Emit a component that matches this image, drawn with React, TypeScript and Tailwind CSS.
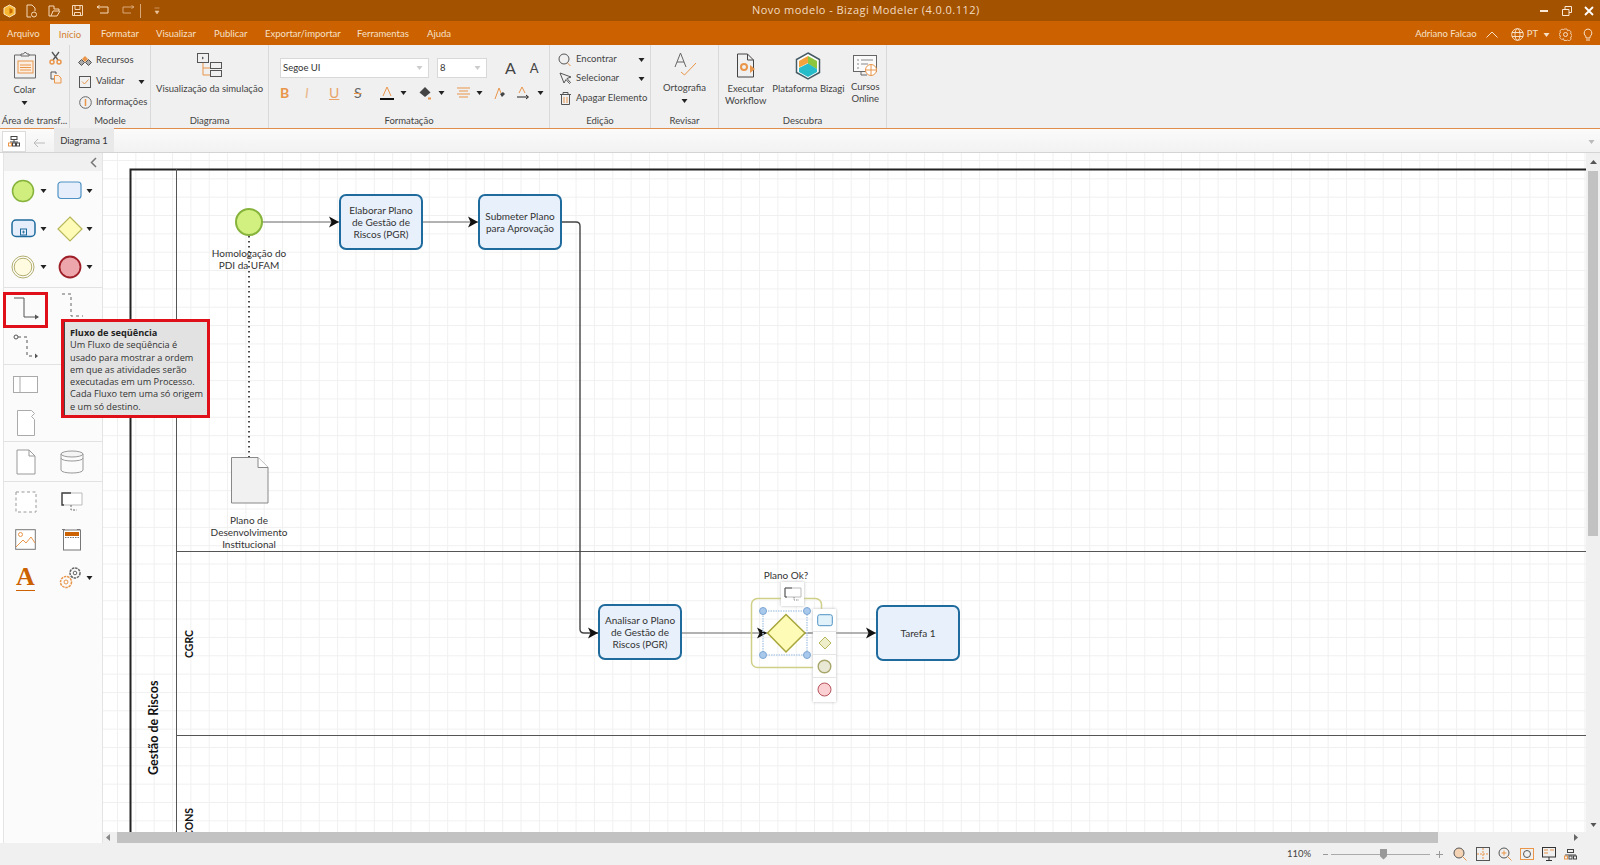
import React from "react";

const Caret = ({ c = "#222" }: { c?: string }) => (
  <svg width="7" height="4" viewBox="0 0 7 4" className="shrink-0"><path d="M0.5 0h6L3.5 4z" fill={c} /></svg>
);

const Ic = ({ w = 16, h = 16, children, vb }: { w?: number; h?: number; vb?: string; children: React.ReactNode }) => (
  <svg width={w} height={h} viewBox={vb ?? `0 0 ${w} ${h}`} fill="none" className="shrink-0">{children}</svg>
);

const Group = ({ w, label, children }: { w: string; label: string; children: React.ReactNode }) => (
  <div className={`${w} h-full flex flex-col border-r border-[#d9d9d9] shrink-0`}>
    <div className="flex-1 min-h-0 flex">{children}</div>
    <div className="h-[15px] text-center text-[9.5px] leading-[15px] text-[#444] whitespace-nowrap">{label}</div>
  </div>
);

const Row = ({ icon, text, caret, cls }: { icon: React.ReactNode; text: string; caret?: boolean; cls?: string }) => (
  <div className={`flex items-center h-[21px] ${cls ?? ""}`}>
    <span className="w-[16px] flex justify-center shrink-0">{icon}</span>
    <span className="ml-[3px] text-[9.5px] text-[#444] whitespace-nowrap flex-1">{text}</span>
    {caret && <Caret />}
  </div>
);

function TitleBar() {
  const s = "#f6d9b8";
  return (
    <div className="h-[21px] bg-[#a35200] flex items-center relative shrink-0">
      <div className="flex items-center pl-[3px]">
        <Ic w={13} h={14}><path d="M6.5 1l5.5 3v6l-5.5 3L1 10V4z" fill="#f7b733" stroke="#fde7c0" /><path d="M6.5 4l3 1.500v3l-3 1.500z" fill="#c96a00" /></Ic>
        <span className="ml-[8px]"><Ic w={14} h={14}><path d="M3 1h5l3 3v3M3 1v12h4" stroke={s} /><circle cx="10" cy="10.500" r="2.500" stroke={s} /></Ic></span>
        <span className="ml-[9px]"><Ic w={14} h={14}><path d="M2 2h5v3h5v2H6l-2 5H2zM4 12h6l3-5" stroke={s} /></Ic></span>
        <span className="ml-[10px]"><Ic w={13} h={13}><path d="M1.500 1.500h10v10h-10zM4 1.500v4h5v-4M3.500 11.500v-3h6v3" stroke={s} /></Ic></span>
        <span className="ml-[12px]"><Ic w={14} h={12}><path d="M1 2h11v6H4M3.500 0.500L1 2l2.500 1.500" stroke={s} /></Ic></span>
        <span className="ml-[11px]"><Ic w={14} h={12}><path d="M13 2H2v6h8M10.500 0.500L13 2l-2.500 1.500" stroke="#d9a878" /></Ic></span>
        <span className="ml-[5px] w-px h-[14px] bg-[#d9a878]" />
        <span className="ml-[13px]"><Ic w={6} h={8}><path d="M0.500 1h5M1 4h4l-2 3z" fill="#e9c49c" stroke="#e9c49c" strokeWidth=".6" /></Ic></span>
      </div>
      <div className="absolute left-[752px] top-0 h-[21px] leading-[20px] text-[11px] tracking-[0.45px] text-[#f3dcc2] whitespace-nowrap [font-family:'Open_Sans',sans-serif]">Novo modelo - Bizagi Modeler (4.0.0.112)</div>
      <div className="ml-auto flex items-center pr-[6px]">
        <span className="w-[8px] h-[2px] bg-[#fbe9d6]" />
        <span className="ml-[14px]"><Ic w={10} h={10}><path d="M0.500 3.500h6.500v6H0.500zM3 3.500V0.500h6.500v6H7" stroke="#fbe9d6" /></Ic></span>
        <span className="ml-[12px]"><Ic w={10} h={10}><path d="M1 1l8 8M9 1l-8 8" stroke="#fff" strokeWidth="1.800" /></Ic></span>
      </div>
    </div>
  );
}

function MenuBar() {
  const t = "text-[9.5px] text-[#f6e0c8] whitespace-nowrap";
  return (
    <div className="h-[24px] bg-[#cc6100] flex items-end shrink-0">
      <span className={`${t} ml-[7px] w-[43px] h-[24px] leading-[26px]`}>Arquivo</span>
      <span className="w-[40px] h-[21px] bg-[#f0f0f0] text-[9.5px] leading-[21px] text-center text-[#d4802f]">Início</span>
      <span className={`${t} ml-[11px] w-[55px] h-[24px] leading-[26px]`}>Formatar</span>
      <span className={`${t} w-[58px] h-[24px] leading-[26px]`}>Visualizar</span>
      <span className={`${t} w-[51px] h-[24px] leading-[26px]`}>Publicar</span>
      <span className={`${t} w-[92px] h-[24px] leading-[26px]`}>Exportar/importar</span>
      <span className={`${t} w-[70px] h-[24px] leading-[26px]`}>Ferramentas</span>
      <span className={`${t} h-[24px] leading-[26px]`}>Ajuda</span>
      <div className="ml-auto h-[24px] flex items-center pr-[7px] pt-[3px]">
        <span className={t}>Adriano Falcao</span>
        <span className="ml-[9px]"><Ic w={12} h={7}><path d="M0.500 6.500L6 1l5.500 5.500" stroke="#f6e0c8" /></Ic></span>
        <span className="ml-[13px]"><Ic w={13} h={13}><circle cx="6.500" cy="6.500" r="5.800" stroke="#f6e0c8" /><ellipse cx="6.500" cy="6.500" rx="2.500" ry="5.800" stroke="#f6e0c8" /><path d="M1 4.500h11M1 8.500h11" stroke="#f6e0c8" /></Ic></span>
        <span className={`${t} ml-[3px]`}>PT</span>
        <span className="ml-[5px]"><Caret c="#f6e0c8" /></span>
        <span className="ml-[9px]"><Ic w={13} h={13}><circle cx="6.500" cy="6.500" r="2" stroke="#f6e0c8" /><path d="M5 1h3l.5 1.800 1.700-.8 2 2-.9 1.600 1.700.9v2l-1.700.8.900 1.700-2 2-1.700-.9L8 12.500H5l-.5-1.800-1.700.9-2-2 .9-1.700L0 7.100v-1.500l1.700-.9-.9-1.700 2-2 1.700.8z" stroke="#f6e0c8" strokeWidth=".8" /></Ic></span>
        <span className="ml-[11px]"><Ic w={10} h={14}><path d="M5 1a4 4 0 0 1 2.500 7c-.5.500-.5 1-.5 2H3c0-1 0-1.500-.5-2A4 4 0 0 1 5 1zM3 12h4" stroke="#f6e0c8" /></Ic></span>
      </div>
    </div>
  );
}

const O = "#e9954a";
const G = "#666";

function Ribbon() {
  return (
    <div className="h-[84px] bg-[#f0f0f0] border-b border-[#e08c4a] flex shrink-0">
      <Group w="w-[70px]" label="Área de transf...">
        <div className="w-[49px] flex flex-col items-center pt-[7px]">
          <Ic w={24} h={27}><path d="M8 3H1.500v23h21V3H16" stroke={G} /><path d="M8 4V2h2.500l1-1.500 1.500 0 1 1.500H16v2z" stroke={G} /><rect x="5" y="9" width="15" height="12" fill="#fbeee0" stroke={O} /><path d="M7 13h11M7 15.500h11M7 18h11" stroke={O} /></Ic>
          <span className="text-[9.5px] text-[#444] leading-[12px] mt-[5px]">Colar</span>
          <span className="mt-[5px]"><Caret /></span>
        </div>
        <div className="flex flex-col items-center pt-[6px] gap-[6px]">
          <Ic w={13} h={14}><path d="M3 1l6 8M10 1L4 9" stroke="#555" strokeWidth="1.300" /><circle cx="3" cy="11" r="2" stroke={O} strokeWidth="1.500" /><circle cx="10" cy="11" r="2" stroke={O} strokeWidth="1.500" /></Ic>
          <Ic w={12} h={13}><path d="M1 1h5v2M1 1v7h3" stroke="#555" /><path d="M4.500 4.500h4l2.500 2.500v5H4.500z" fill="#fbeee0" stroke={O} /></Ic>
        </div>
      </Group>
      <Group w="w-[81px]" label="Modele">
        <div className="flex flex-col pl-[7px] pr-[5px] pt-[5px] w-full">
          <Row text="Recursos" icon={<Ic w={14} h={12}><path d="M7 1l3 3-3 3-3-3z" fill="#e9954a" /><path d="M3.500 4.500l3 3-3 3-3-3zM10.500 4.500l3 3-3 3-3-3z" stroke="#555" fill="#aaa" /></Ic>} />
          <Row text="Validar" caret icon={<Ic w={12} h={12}><rect x=".5" y=".5" width="11" height="11" stroke="#555" /><path d="M3 5.500l2.500 2.500L9.500 3.500" stroke={O} /></Ic>} />
          <Row text="Informações" icon={<Ic w={13} h={13}><circle cx="6.500" cy="6.500" r="5.800" stroke="#666" /><path d="M6.500 3v7" stroke={O} strokeWidth="1.500" /></Ic>} />
        </div>
      </Group>
      <Group w="w-[118px]" label="Diagrama">
        <div className="w-full flex flex-col items-center pt-[8px]">
          <Ic w={25} h={26}><rect x=".5" y=".5" width="11" height="9" stroke="#555" /><path d="M5 3.500l2 1.500-2 1.500z" fill="#555" /><path d="M6 10v12h7M6 15h7" stroke={O} /><rect x="13.500" y="9.500" width="11" height="6" stroke="#555" /><rect x="13.500" y="17.500" width="11" height="6" stroke="#555" /></Ic>
          <span className="text-[9.5px] text-[#444] leading-[12px] mt-[4px] whitespace-nowrap">Visualização da simulação</span>
        </div>
      </Group>
      <Group w="w-[281px]" label="Formatação">
        <div className="w-full pl-[11px] pt-[13px]">
          <div className="flex items-center h-[20px]">
            <div className="w-[149px] h-[20px] bg-white border border-[#d8d8d8] flex items-center pl-[2px] pr-[5px] text-[9.5px] text-[#333]"><span className="flex-1">Segoe UI</span><Caret c="#ccc" /></div>
            <div className="ml-[8px] w-[50px] h-[20px] bg-white border border-[#d8d8d8] flex items-center pl-[2px] pr-[5px] text-[9.5px] text-[#333]"><span className="flex-1">8</span><Caret c="#ccc" /></div>
            <span className="ml-[18px] text-[16px] leading-none text-[#444]">A</span>
            <span className="ml-[14px] text-[13px] leading-none text-[#444]">A</span>
          </div>
          <div className="flex items-center h-[20px] mt-[5px] text-[14px] leading-none">
            <span className="w-[10px] font-bold text-[#e9954a]">B</span>
            <span className="ml-[15px] w-[8px] italic text-[#e9b78a]">I</span>
            <span className="ml-[16px] w-[10px] underline text-[#e9a368]">U</span>
            <span className="ml-[15px] w-[10px] line-through decoration-[#e9954a] text-[#666]">S</span>
            <span className="ml-[16px]"><Ic w={14} h={15}><path d="M3 10L7 1l4 9" stroke={O} /><path d="M0 13h14" stroke="#111" strokeWidth="2" /></Ic></span>
            <span className="ml-[6px]"><Caret /></span>
            <span className="ml-[11px]"><Ic w={14} h={14}><path d="M7 1l5.500 5.500L7 11 1.500 6.500z" fill="#444" /><path d="M10 12.500h3" stroke={O} strokeWidth="2" /></Ic></span>
            <span className="ml-[6px]"><Caret /></span>
            <span className="ml-[12px]"><Ic w={13} h={12}><path d="M0 1h13M2 4h9M0 7h13M2 10h9" stroke={O} /></Ic></span>
            <span className="ml-[6px]"><Caret /></span>
            <span className="ml-[10px]"><Ic w={13} h={13}><path d="M2 12L6 1l2 5" stroke={O} /><path d="M7 7l3-2 2 2-3 3z" fill="#444" /></Ic></span>
            <span className="ml-[10px]"><Ic w={14} h={14}><path d="M3 7l3-6 3 6" stroke={O} /><path d="M1 11h11M10 9l2.500 2L10 13" stroke="#222" /></Ic></span>
            <span className="ml-[7px]"><Caret /></span>
          </div>
        </div>
      </Group>
      <Group w="w-[101px]" label="Edição">
        <div className="w-full flex flex-col pl-[7px] pr-[5px] pt-[5px]">
          <Row text="Encontrar" caret cls="!h-[19px]" icon={<Ic w={14} h={14}><circle cx="6" cy="6" r="5" stroke="#555" /><path d="M9.500 10l3 3" stroke={O} /></Ic>} />
          <Row text="Selecionar" caret cls="!h-[19px]" icon={<Ic w={13} h={13}><path d="M1 1l11 4-4 1.500 3.500 4-1 1-3.500-4-2 3.500z" stroke="#555" /></Ic>} />
          <Row text="Apagar Elemento" cls="!h-[21px]" icon={<Ic w={11} h={13}><path d="M0 2.500h11M3 2V.5h5V2" stroke="#555" /><path d="M1.500 3v9.500h8V3" stroke="#555" /><path d="M4 5v6M7 5v6" stroke={O} /></Ic>} />
        </div>
      </Group>
      <Group w="w-[68px]" label="Revisar">
        <div className="w-full flex flex-col items-center pt-[6px]">
          <Ic w={24} h={26}><path d="M2 16L7.500 2 13 16M4 11h7" stroke="#666" /><path d="M8 21l3.500 3L23 12" stroke={O} /></Ic>
          <span className="text-[9.5px] text-[#444] leading-[12px] mt-[5px]">Ortografia</span>
          <span className="mt-[5px]"><Caret /></span>
        </div>
      </Group>
      <Group w="w-[168px]" label="Descubra">
        <div className="w-full flex">
          <div className="w-[54px] flex flex-col items-center pt-[8px]">
            <Ic w={20} h={26}><path d="M1.500 1h10l6 6v17H1.500z" stroke="#444" /><path d="M11.500 1v6h6" stroke="#444" /><circle cx="8" cy="14" r="3" stroke={O} strokeWidth="2" /><path d="M14 12l5 4-5 4z" fill={O} /></Ic>
            <span className="text-[9.5px] text-[#444] leading-[12px] mt-[4px] text-center">Executar Workflow</span>
          </div>
          <div className="w-[72px] flex flex-col items-center pt-[7px]">
            <Ic w={26} h={28}><path d="M13 1l11.500 6.500v13L13 27 1.500 20.500v-13z" fill="#fff" stroke="#455a64" strokeWidth="1.500" /><path d="M13 4L4 9v6.500l9-4.500z" fill="#f4a23b" /><path d="M13 4l9 5v8l-9-5z" fill="#8cc63f" /><path d="M4 16l9-4.500 9 5.500v3l-9 5-9-5z" fill="#26bcc9" /></Ic>
            <span className="text-[9.5px] text-[#444] leading-[12px] mt-[3px] whitespace-nowrap">Plataforma Bizagi</span>
          </div>
          <div className="w-[42px] flex flex-col items-center pt-[10px]">
            <Ic w={24} h={23}><rect x=".5" y=".5" width="23" height="16" stroke="#666" fill="#fafafa" /><path d="M4 5h2M8 5h12M4 9h2M8 9h7M4 13h2" stroke="#888" /><path d="M8 17v3h6" stroke="#666" /><circle cx="18" cy="15" r="5.500" fill="#fff" stroke={O} /><path d="M12.500 15h11M18 9.500v11" stroke={O} /></Ic>
            <span className="text-[9.5px] text-[#444] leading-[12px] mt-[3px] text-center">Cursos Online</span>
          </div>
        </div>
      </Group>
      <div className="flex-1" />
    </div>
  );
}

function TabBar() {
  return (
    <div className="h-[24px] bg-[linear-gradient(#fbfbfb,#f2f2f2)] border-b border-[#d4d4d4] flex items-end shrink-0">
      <div className="ml-[2px] w-[24px] h-[21px] bg-white border border-[#dcdcdc] flex items-center justify-center">
        <Ic w={12} h={11}><rect x="3" y=".5" width="6" height="3" stroke="#444" /><path d="M6 4v2M2 6h8" stroke="#444" /><rect x=".5" y="7" width="3" height="3" stroke={O} /><rect x="4.500" y="7" width="3" height="3" stroke="#444" /><rect x="8.500" y="7" width="3" height="3" stroke="#444" /></Ic>
      </div>
      <span className="ml-[7px] mb-[4px]"><Ic w={12} h={10}><path d="M12 5H1M5 1L1 5l4 4" stroke="#bbb" /></Ic></span>
      <div className="ml-[9px] w-[60px] h-[24px] bg-[#e9e9e9] text-[9.5px] leading-[26px] text-center text-[#333] whitespace-nowrap">Diagrama 1</div>
      <div className="flex-1" />
      <span className="mr-[5px] mb-[8px]"><Caret c="#bbb" /></span>
    </div>
  );
}

const PCell = ({ children, caret }: { children: React.ReactNode; caret?: boolean }) => (
  <div className={`relative flex items-center justify-center h-full ${caret ? "pr-[9px]" : "pr-[4px]"}`}>
    {children}
    {caret && <span className="absolute right-[4px] top-1/2 -translate-y-1/2 flex"><Caret /></span>}
  </div>
);

const PRow = ({ children }: { children: React.ReactNode }) => (
  <div className="grid grid-cols-[47px_46px] h-[38px] pt-[1px]">{children}</div>
);

function Palette() {
  return (
    <div className="ml-[3px] w-[100px] bg-[#fbfbfb] border-l border-r border-[#e4e4e4] shrink-0 flex flex-col relative">
      <div className="h-[18px] bg-[#f0f0f0] flex items-center justify-end pr-[5px] shrink-0">
        <Ic w={7} h={11}><path d="M6 1L1.500 5.500 6 10" stroke="#777" strokeWidth="1.500" /></Ic>
      </div>
      <div className="pb-[2px] border-b border-[#e2e2e2]">
        <PRow>
          <PCell caret><svg width="24" height="24" fill="none"><circle cx="12" cy="12" r="10.500" fill="#cfee7e" stroke="#86b33b" strokeWidth="1.500" /></svg></PCell>
          <PCell caret><svg width="25" height="19" fill="none"><rect x="1" y="1" width="23" height="16.500" rx="3" fill="#e6eefb" stroke="#4e92c4" strokeWidth="1.200" /></svg></PCell>
        </PRow>
        <PRow>
          <PCell caret><svg width="25" height="19" fill="none"><rect x="1" y="1" width="23" height="16.500" rx="4" fill="#e6eefb" stroke="#1f6b9d" strokeWidth="1.500" /><rect x="9.500" y="10" width="6" height="6" stroke="#1f6b9d" /><path d="M11 13h3M12.500 11.500v3" stroke="#1f6b9d" strokeWidth=".8" /></svg></PCell>
          <PCell caret><svg width="26" height="26" fill="none"><path d="M13 1l12 12-12 12L1 13z" fill="#fdfbb5" stroke="#b7b65a" strokeWidth="1.200" /></svg></PCell>
        </PRow>
        <PRow>
          <PCell caret><svg width="24" height="24" fill="none"><circle cx="12" cy="12" r="11" fill="#fff" stroke="#b3ad6e" /><circle cx="12" cy="12" r="8.800" fill="#fffbe0" stroke="#b3ad6e" /></svg></PCell>
          <PCell caret><svg width="24" height="24" fill="none"><circle cx="12" cy="12" r="10.500" fill="#eda6ab" stroke="#9e1f28" strokeWidth="1.800" /></svg></PCell>
        </PRow>
      </div>
      <div className="border-b border-[#e2e2e2]">
        <PRow>
          <PCell><svg width="26" height="24" fill="none"><path d="M1 2h10v19h14" stroke="#555" /><path d="M22 18.500l4 2.500-4 2.500z" fill="#555" /></svg></PCell>
          <PCell><svg width="24" height="30" viewBox="0 0 24 30" fill="none"><path d="M2 1h9v22h12" stroke="#666" strokeDasharray="3 3" /></svg></PCell>
        </PRow>
        <PRow>
          <PCell><svg width="26" height="24" fill="none"><circle cx="3" cy="3" r="2" stroke="#555" /><path d="M5 3h9v19h9" stroke="#555" strokeDasharray="3 3" /><path d="M22 19.500l3 2.500-3 2.500z" fill="#555" /></svg></PCell>
          <PCell>{null}</PCell>
        </PRow>
      </div>
      <PRow>
        <PCell><svg width="25" height="17" fill="none"><rect x=".5" y=".5" width="24" height="16" fill="#fff" stroke="#aaa" /><path d="M7 0v17" stroke="#aaa" /></svg></PCell>
        <PCell>{null}</PCell>
      </PRow>
      <div className="border-b border-[#e2e2e2]">
        <PRow>
          <PCell><svg width="18" height="26" fill="none"><path d="M.5 .5h14l3 3-3 3 3 3v16H.5z" fill="#fff" stroke="#aaa" /></svg></PCell>
          <PCell>{null}</PCell>
        </PRow>
      </div>
      <div className="border-b border-[#e2e2e2] pb-[1px]">
        <PRow>
          <PCell><svg width="20" height="26" fill="none"><path d="M1 1h12l6 6v18H1z" fill="#fff" stroke="#999" /><path d="M13 1v6h6" stroke="#999" /></svg></PCell>
          <PCell><svg width="24" height="24" fill="none"><ellipse cx="12" cy="4" rx="11" ry="3" fill="#f4f4f4" stroke="#999" /><path d="M1 4v16c0 4 22 4 22 0V4M1 8c0 4 22 4 22 0" fill="none" stroke="#999" /></svg></PCell>
        </PRow>
      </div>
      <PRow>
        <PCell><svg width="22" height="22" fill="none"><rect x="1" y="1" width="20" height="20" fill="#fff" stroke="#999" strokeDasharray="3 2.500" /></svg></PCell>
        <PCell><svg width="22" height="20" fill="none"><path d="M1 1h20v12H1z" fill="#fff" stroke="#bbb" /><path d="M10 1H1v12h2" stroke="#444" strokeWidth="1.400" /><path d="M10 13v5h6" stroke="#666" strokeDasharray="2 1.500" /></svg></PCell>
      </PRow>
      <PRow>
        <PCell><svg width="21" height="21" fill="none"><rect x=".7" y=".7" width="19.600" height="19.600" fill="#fff" stroke="#777" /><circle cx="5.500" cy="5.500" r="2" stroke={O} /><path d="M1 18l7-7 3 3 5-6 4 6" stroke={O} /></svg></PCell>
        <PCell><svg width="20" height="23" fill="none"><rect x="1.500" y="2" width="17" height="20" fill="#fff" stroke="#777" /><rect x="3" y="4" width="14" height="4" fill="#cc6100" /><path d="M3 9.500h14" stroke="#777" strokeDasharray="1.500 1" /><path d="M0 1.500h20" stroke="#777" strokeDasharray="3 12" /></svg></PCell>
      </PRow>
      <PRow>
        <PCell><span className="text-[26px] leading-[26px] font-bold text-[#cc6100] [font-family:'Liberation_Serif',serif] border-b border-[#cc6100]">A</span></PCell>
        <PCell caret><svg width="24" height="24" fill="none"><circle cx="8" cy="16" r="5.500" stroke={O} strokeWidth="1.500" strokeDasharray="2.500 .8" /><circle cx="8" cy="16" r="2" stroke={O} /><circle cx="17" cy="7" r="5" stroke="#666" strokeWidth="1.500" strokeDasharray="2.500 .8" /><circle cx="17" cy="7" r="1.800" stroke="#666" /></svg></PCell>
      </PRow>
    </div>
  );
}

const Task = ({ pos, text }: { pos: string; text: string }) => (
  <div className={`absolute ${pos} w-[84px] h-[56px] rounded-[7px] bg-[#e8f0fb] border-2 border-[#1f6b9d] flex items-center justify-center text-center text-[10px] leading-[12px] text-[#333] whitespace-pre-line`}>{text}</div>
);

function Canvas() {
  const line = "#444";
  return (
    <div className="relative flex-1 overflow-hidden bg-white bg-[linear-gradient(to_right,#f0f0f0_1px,transparent_1px),linear-gradient(to_bottom,#f0f0f0_1px,transparent_1px)] bg-[length:18.35px_18.35px] bg-[position:14px_7px]">
      <svg className="absolute left-0 top-0" width="1483" height="679" viewBox="103 153 1483 679" fill="none">
        <defs>
          <marker id="ah" markerWidth="12" markerHeight="12" refX="10" refY="6" orient="auto" markerUnits="userSpaceOnUse"><path d="M0 0.500L10 6 0 11.500 2.500 6z" fill="#111" /></marker>
        </defs>
        <path d="M130.500 832V169.500H1586" stroke="#222" strokeWidth="2" />
        <path d="M176.500 169V832" stroke="#555" />
        <path d="M176 551.500H1586M176 735.500H1586" stroke="#555" />
        <path d="M249 236V457" stroke="#111" strokeWidth="1.500" strokeDasharray="1.500 3.500" />
        <path d="M262 222H339" stroke="#666" strokeWidth="1.200" markerEnd="url(#ah)" />
        <path d="M423 222H478" stroke="#666" strokeWidth="1.200" markerEnd="url(#ah)" />
        <path d="M562 222H576q4 0 4 4V629q0 4 4 4H598" stroke={line} strokeWidth="1.400" markerEnd="url(#ah)" />
        <path d="M682 633H767" stroke="#666" strokeWidth="1.200" markerEnd="url(#ah)" />
        <path d="M836 633H876" stroke="#666" strokeWidth="1.200" markerEnd="url(#ah)" />
        <path d="M805 633H813" stroke="#666" strokeWidth="1.200" />
        <circle cx="249" cy="222" r="13" fill="#d2f07f" stroke="#86b33b" strokeWidth="2" />
        <path d="M231.500 457.500H258l10 10V503H231.500z" fill="#f1f1f1" stroke="#888" />
        <path d="M258 457.500v10h10" stroke="#888" fill="#fff" />
        <rect x="751.500" y="598.500" width="70" height="69" rx="6" stroke="#d0cf88" strokeWidth="1.500" />
        <rect x="763" y="611" width="44" height="44" stroke="#b6cfe9" strokeWidth="1.500" strokeDasharray="1.500 1" />
        <path d="M786 614.500L805 633 786 652 767.500 633z" fill="#fdfbb5" stroke="#a8a63a" strokeWidth="1.500" />
        {[[763, 611], [807, 611], [763, 655], [807, 655]].map(([x, y]) => (
          <circle key={`${x}-${y}`} cx={x} cy={y} r="3.500" fill="#a9c9ec" stroke="#7ea6d1" />
        ))}
      </svg>

      <Task pos="left-[236px] top-[41px]" text={"Elaborar Plano\nde Gestão de\nRiscos (PGR)"} />
      <Task pos="left-[375px] top-[41px]" text={"Submeter Plano\npara Aprovação"} />
      <Task pos="left-[495px] top-[451px]" text={"Analisar o Plano\nde Gestão de\nRiscos (PGR)"} />
      <Task pos="left-[773px] top-[452px]" text="Tarefa 1" />

      <div className="absolute left-[96px] top-[94px] w-[100px] text-center text-[10px] leading-[12px] text-[#333] whitespace-pre-line">{"Homologação do\nPDI da UFAM"}</div>
      <div className="absolute left-[96px] top-[361px] w-[100px] text-center text-[10px] leading-[12px] text-[#333] whitespace-pre-line">{"Plano de\nDesenvolvimento\nInstitucional"}</div>
      <div className="absolute left-[643px] top-[416px] w-[80px] text-center text-[10px] leading-[12px] text-[#333]">Plano Ok?</div>

      <div className="absolute left-[42px] top-[527px] h-[96px] flex items-center justify-center [writing-mode:vertical-rl] rotate-180 text-[12.5px] font-bold text-[#111] whitespace-nowrap">Gestão de Riscos</div>
      <div className="absolute left-[79px] top-[476px] h-[30px] flex items-center justify-center [writing-mode:vertical-rl] rotate-180 text-[10.5px] font-bold text-[#111] whitespace-nowrap">CGRC</div>
      <div className="absolute left-[79px] top-[654px] h-[30px] flex items-center justify-center [writing-mode:vertical-rl] rotate-180 text-[10.5px] font-bold text-[#111] whitespace-nowrap">CONS</div>

      <div className="absolute left-[678px] top-[429px] w-[23px] h-[24px] bg-white shadow-[0_0_3px_#bbb] flex items-center justify-center">
        <svg width="18" height="15"><path d="M1 1h16v9H1z" stroke="#bbb" fill="#fff" /><path d="M8 1H1v9h2" stroke="#555" fill="none" /><path d="M10 10v3h5" stroke="#888" strokeDasharray="1.500 1" fill="none" /></svg>
      </div>
      <div className="absolute left-[710px] top-[456px] w-[23px] h-[93px] bg-white shadow-[0_0_3px_#bbb] flex flex-col">
        <div className="h-[23px] flex items-center justify-center border-b border-[#e5e5e5]"><svg width="16" height="13"><rect x=".7" y=".7" width="14.600" height="11" rx="2" fill="#e1f2fb" stroke="#4e92c4" /></svg></div>
        <div className="h-[23px] flex items-center justify-center border-b border-[#e5e5e5]"><svg width="14" height="14"><path d="M7 1l6 6-6 6-6-6z" fill="#eeeecb" stroke="#b7b65a" /></svg></div>
        <div className="h-[23px] flex items-center justify-center border-b border-[#e5e5e5]"><svg width="15" height="15"><circle cx="7.500" cy="7.500" r="6.300" fill="#e8e8d5" stroke="#a8a66a" strokeWidth="1.400" /></svg></div>
        <div className="h-[23px] flex items-center justify-center"><svg width="15" height="15"><circle cx="7.500" cy="7.500" r="6.500" fill="#fbd0d2" stroke="#b5545a" /></svg></div>
      </div>
    </div>
  );
}

function Status() {
  return (
    <div className="h-[22px] bg-[#f0f0f0] flex items-center shrink-0">
      <span className="ml-[1287px] w-[36px] text-[9.5px] text-[#444]">110%</span>
      <span className="w-[5px] h-px bg-[#999]" />
      <div className="relative ml-[3px] w-[99px] h-px bg-[#aaa]">
        <span className="absolute left-[49px] -top-[5px] w-[7px] h-[11px] bg-[#999] [clip-path:polygon(0_0,100%_0,100%_70%,50%_100%,0_70%)]" />
      </div>
      <span className="ml-[6px]"><Ic w={7} h={7}><path d="M0 3.500h7M3.500 0v7" stroke="#999" /></Ic></span>
      <span className="ml-[10px]"><Ic w={14} h={14}><circle cx="6" cy="6" r="5" stroke="#555" fill="#f3d3b4" /><path d="M9.500 9.500l4 4" stroke={O} /></Ic></span>
      <span className="ml-[9px]"><Ic w={14} h={14}><rect x=".5" y=".5" width="13" height="13" stroke="#555" /><path d="M7 1v12M1 7h12" stroke={O} strokeDasharray="2 1" /></Ic></span>
      <span className="ml-[8px]"><Ic w={14} h={14}><circle cx="6" cy="6" r="5" stroke="#555" /><path d="M3.500 6h5M6 3.500v5" stroke={O} /><path d="M9.500 9.500l4 4" stroke={O} /></Ic></span>
      <span className="ml-[8px]"><Ic w={14} h={13}><rect x=".5" y=".5" width="13" height="11" stroke={O} /><circle cx="7" cy="6" r="3.500" stroke="#555" /></Ic></span>
      <span className="ml-[8px]"><Ic w={14} h={14}><rect x=".5" y=".5" width="13" height="9.500" stroke="#333" /><path d="M2 3h4M8 3h4M2 6h4" stroke={O} /><path d="M7 10v3M4 13.500h6" stroke="#333" /></Ic></span>
      <span className="ml-[8px]"><Ic w={13} h={11}><rect x="3.500" y=".5" width="6" height="3" stroke="#444" /><path d="M1 6h11" stroke="#444" /><rect x=".5" y="7" width="3" height="3" stroke={O} /><rect x="5" y="7" width="3" height="3" stroke="#444" /><rect x="9.500" y="7" width="3" height="3" stroke="#444" /></Ic></span>
    </div>
  );
}

export default function App() {
  return (
    <div className="relative w-[1600px] h-[865px] overflow-hidden bg-white flex flex-col [font-family:'Lato','Open_Sans',sans-serif]">
      <TitleBar />
      <MenuBar />
      <Ribbon />
      <TabBar />
      <div className="flex-1 min-h-0 flex">
        <Palette />
        <div className="flex-1 min-w-0 flex flex-col">
          <div className="flex-1 min-h-0 flex">
            <Canvas />
            <div className="w-[14px] bg-[#f0f0f0] flex flex-col items-center shrink-0">
              <span className="mt-[7px]"><svg width="7" height="4"><path d="M0 4h7L3.500 0z" fill="#555" /></svg></span>
              <span className="mt-[7px] w-[10px] h-[365px] bg-[#c2c2c2]" />
              <span className="mt-auto mb-[5px]"><Caret c="#555" /></span>
            </div>
          </div>
          <div className="h-[11px] bg-[#f0f0f0] flex items-center shrink-0">
            <span className="ml-[3px]"><svg width="4" height="7"><path d="M4 0v7L0 3.500z" fill="#888" /></svg></span>
            <span className="ml-[7px] w-[1321px] h-[11px] bg-[#c2c2c2]" />
            <span className="ml-auto mr-[22px]"><svg width="4" height="7"><path d="M0 0v7l4-3.500z" fill="#666" /></svg></span>
          </div>
        </div>
      </div>
      <Status />

      <div className="absolute left-[3px] top-[292px] w-[45px] h-[36px] border-[3px] border-[#e0101a]" />
      <div className="absolute left-[61px] top-[319px] w-[149px] h-[99px] bg-[#e2e2e2] border-[3px] border-[#e0101a] pl-[6px] pt-[5px] text-[9.2px] leading-[12.3px] text-[#333] shadow-[inset_1px_0_0_#444] whitespace-nowrap [font-family:'Open_Sans',sans-serif]">
        <div className="font-bold text-[#222]">Fluxo de seqüência</div>
        <div>Um Fluxo de seqüência é</div>
        <div>usado para mostrar a ordem</div>
        <div>em que as atividades serão</div>
        <div>executadas em um Processo.</div>
        <div>Cada Fluxo tem uma só origem</div>
        <div>e um só destino.</div>
      </div>
    </div>
  );
}
